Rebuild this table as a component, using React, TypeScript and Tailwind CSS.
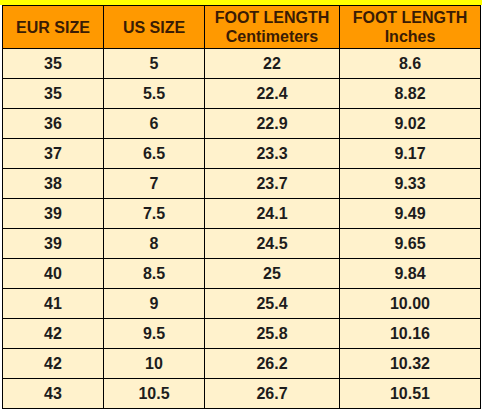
const rows: [string, string, string, string][] = [
  ['35', '5', '22', '8.6'],
  ['35', '5.5', '22.4', '8.82'],
  ['36', '6', '22.9', '9.02'],
  ['37', '6.5', '23.3', '9.17'],
  ['38', '7', '23.7', '9.33'],
  ['39', '7.5', '24.1', '9.49'],
  ['39', '8', '24.5', '9.65'],
  ['40', '8.5', '25', '9.84'],
  ['41', '9', '25.4', '10.00'],
  ['42', '9.5', '25.8', '10.16'],
  ['42', '10', '26.2', '10.32'],
  ['43', '10.5', '26.7', '10.51'],
]

export default function App() {
  return (
    <div className="w-[482px] h-[412px] bg-white font-['Liberation_Sans',Arial,sans-serif] font-bold overflow-hidden">
      <div className="h-[5px] bg-[#ffff00]" />
      <table className="ml-[2px] w-[478px] table-fixed border-collapse">
        <colgroup>
          <col className="w-[101px]" />
          <col className="w-[101px]" />
          <col className="w-[135px]" />
          <col className="w-[141px]" />
        </colgroup>
        <thead>
          <tr className="h-[43px] bg-[#ff9900] text-[#3a1c04] text-[16px] leading-[19px]">
            <th className="border border-black">EUR SIZE</th>
            <th className="border border-black">US SIZE</th>
            <th className="border border-black">
              FOOT LENGTH
              <br />
              Centimeters
            </th>
            <th className="border border-black">
              FOOT LENGTH
              <br />
              Inches
            </th>
          </tr>
        </thead>
        <tbody>
          {rows.map((r, i) => (
            <tr key={i} className="h-[30px] bg-[#fff2cc] text-[#1c1c1c] text-[16px]">
              {r.map((v, j) => (
                <td key={j} className="border border-black text-center p-0">
                  {v}
                </td>
              ))}
            </tr>
          ))}
        </tbody>
      </table>
    </div>
  )
}
